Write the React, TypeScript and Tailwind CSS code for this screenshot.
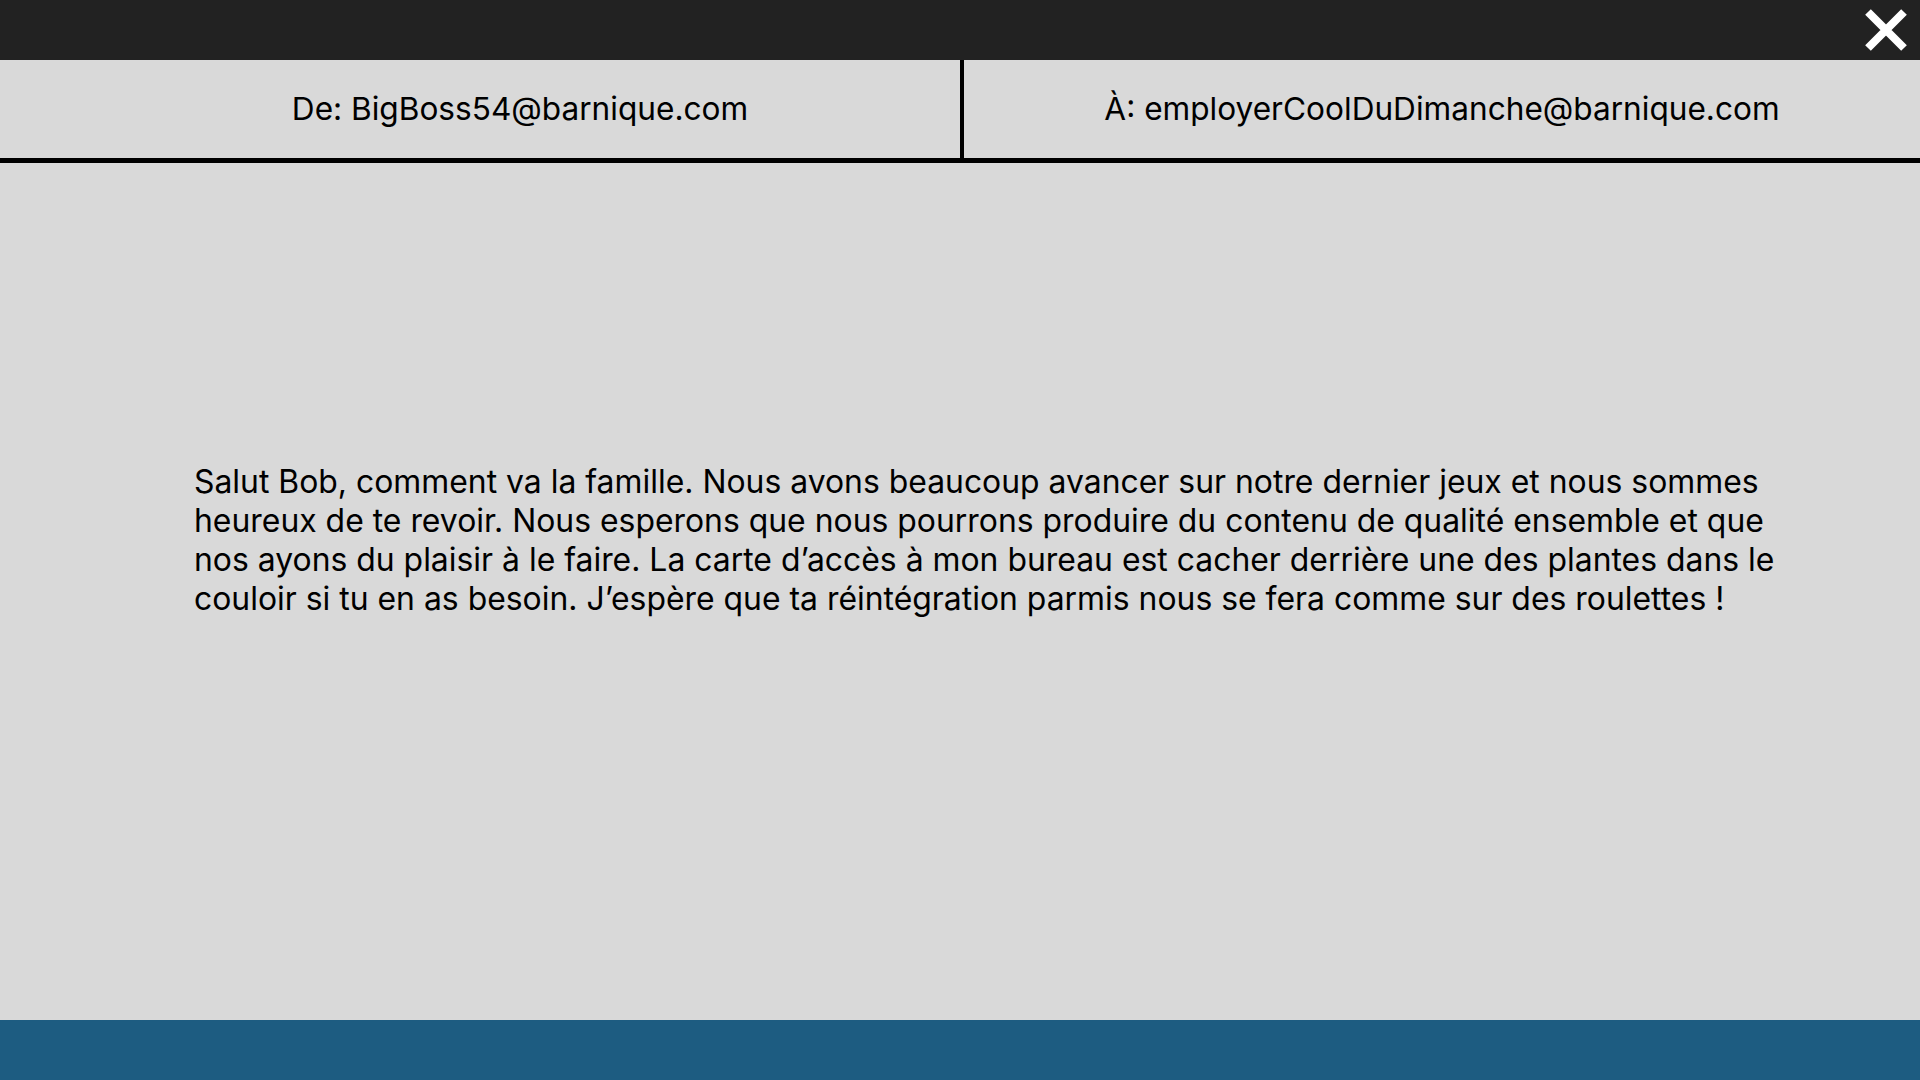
import React from "react";

const message =
  "Salut Bob, comment va la famille. Nous avons beaucoup avancer sur notre dernier jeux et nous sommes heureux de te revoir. Nous esperons que nous pourrons produire du contenu de qualité ensemble et que nos ayons du plaisir à le faire. La carte d’accès à mon bureau est cacher derrière une des plantes dans le couloir si tu en as besoin. J’espère que ta réintégration parmis nous se fera comme sur des roulettes !";

const App = () => {
  return (
    <div
      className="w-[1920px] h-[1080px] flex flex-col bg-[#d9d9d9] text-black overflow-hidden"
      style={{ fontFamily: "Inter, 'Noto Sans', sans-serif" }}
    >
      <div className="h-[60px] bg-[#222222] flex items-center justify-end pr-[11px] shrink-0">
        <button className="w-[46px] h-[46px] flex items-center justify-center">
          <svg width="46" height="44" viewBox="0 0 46 44">
            <path
              d="M5 4 L41 40 M41 4 L5 40"
              stroke="#ffffff"
              strokeWidth="8"
              strokeLinecap="butt"
            />
          </svg>
        </button>
      </div>

      <div className="flex h-[103px] border-b-[5px] border-black shrink-0">
        <div className="w-[960px] flex items-center justify-center pl-[80px] text-[31.6px]">
          De: BigBoss54@barnique.com
        </div>
        <div className="w-[4px] bg-black"></div>
        <div className="flex-1 flex items-center justify-center text-[31.6px]">
          À: employerCoolDuDimanche@barnique.com
        </div>
      </div>

      <div className="flex-1 pt-[299px] pl-[194px]">
        <p className="w-[1600px] text-[31.9px] leading-[39px]">{message}</p>
      </div>

      <div className="h-[60px] bg-[#1d5c81] shrink-0"></div>
    </div>
  );
};

export default App;
